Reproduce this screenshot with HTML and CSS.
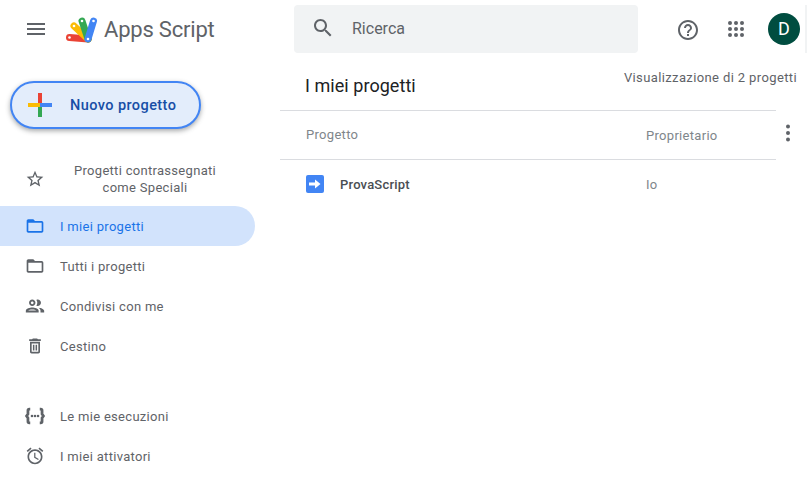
FILE: index.html
```html
<!DOCTYPE html>
<html lang="it">
<head>
  <meta charset="UTF-8">
  <meta name="viewport" content="width=device-width, initial-scale=1.0">
  <title>Apps Script</title>
  <link rel="stylesheet" href="styles.css">
</head>
<body>
  <header class="topbar">
    <div class="brand">
      <svg class="icon menu-icon" viewBox="0 0 24 24"><path d="M3 18h18v-2H3v2zm0-5h18v-2H3v2zm0-7v2h18V6H3z"/></svg>
      <svg class="logo" viewBox="0 0 34 28" width="34" height="28">
        <line x1="24" y1="24" x2="5.500" y2="22.500" stroke="#ea4335" stroke-width="7" stroke-linecap="round"/>
        <line x1="24" y1="24" x2="10" y2="11" stroke="#fbbc04" stroke-width="7" stroke-linecap="round"/>
        <line x1="24" y1="24" x2="18" y2="6" stroke="#34a853" stroke-width="7" stroke-linecap="round"/>
        <line x1="24" y1="24" x2="29.500" y2="6" stroke="#4285f4" stroke-width="7" stroke-linecap="round"/>
        <circle cx="5.500" cy="22.500" r="1.300" fill="#fff"/>
        <circle cx="10" cy="11" r="1.300" fill="#fff"/>
        <circle cx="18" cy="6" r="1.300" fill="#fff"/>
        <circle cx="29.500" cy="6" r="1.300" fill="#fff"/>
        <circle cx="24" cy="24" r="1.300" fill="#fff"/>
      </svg>
      <span class="brand-name">Apps Script</span>
    </div>
    <div class="search">
      <svg class="icon" viewBox="0 0 24 24"><path d="M15.500 14h-.79l-.28-.27C15.410 12.590 16 11.110 16 9.500 16 5.910 13.090 3 9.500 3S3 5.910 3 9.500 5.910 16 9.500 16c1.610 0 3.090-.59 4.230-1.570l.27.28v.79l5 4.990L20.490 19l-4.990-5zm-6 0C7.010 14 5 11.990 5 9.500S7.010 5 9.500 5 14 7.010 14 9.500 11.990 14 9.500 14z"/></svg>
      <span>Ricerca</span>
    </div>
    <div class="top-actions">
      <svg class="icon help-icon" viewBox="0 0 24 24"><path d="M11 18h2v-2h-2v2zm1-16C6.480 2 2 6.480 2 12s4.480 10 10 10 10-4.480 10-10S17.520 2 12 2zm0 18c-4.410 0-8-3.590-8-8s3.590-8 8-8 8 3.590 8 8-3.590 8-8 8zm0-14c-2.210 0-4 1.790-4 4h2c0-1.100.9-2 2-2s2 .9 2 2c0 2-3 1.750-3 5h2c0-2.250 3-2.500 3-5 0-2.210-1.790-4-4-4z"/></svg>
      <svg class="icon" viewBox="0 0 24 24">
        <circle cx="6" cy="6" r="2"/><circle cx="12" cy="6" r="2"/><circle cx="18" cy="6" r="2"/>
        <circle cx="6" cy="12" r="2"/><circle cx="12" cy="12" r="2"/><circle cx="18" cy="12" r="2"/>
        <circle cx="6" cy="18" r="2"/><circle cx="12" cy="18" r="2"/><circle cx="18" cy="18" r="2"/>
      </svg>
      <div class="avatar">D</div>
    </div>
    <div class="edge-sliver"></div>
  </header>

  <div class="layout">
    <aside class="sidebar">
      <button class="new-project">
        <svg viewBox="0 0 24 24" width="24" height="24">
          <rect x="10" y="0" width="4" height="12" fill="#ea4335"/>
          <rect x="10" y="12" width="4" height="12" fill="#34a853"/>
          <rect x="0" y="10" width="12" height="4" fill="#fbbc04"/>
          <rect x="12" y="10" width="12" height="4" fill="#4285f4"/>
        </svg>
        <span>Nuovo progetto</span>
      </button>

      <nav class="nav">
        <a class="nav-item starred">
          <svg class="icon" viewBox="0 0 24 24"><path d="M22 9.240l-7.190-.62L12 2 9.190 8.630 2 9.240l5.460 4.730L5.820 21 12 17.270 18.180 21l-1.630-7.030L22 9.240zM12 15.400l-3.760 2.270 1-4.280-3.320-2.880 4.380-.38L12 6.100l1.710 4.040 4.380.38-3.320 2.880 1 4.280L12 15.400z"/></svg>
          <span>Progetti contrassegnati come Speciali</span>
        </a>
        <a class="nav-item active">
          <svg class="icon" viewBox="0 0 24 24"><path d="M20 6h-8l-2-2H4c-1.100 0-1.990.9-1.990 2L2 18c0 1.100.9 2 2 2h16c1.100 0 2-.9 2-2V8c0-1.100-.9-2-2-2zm0 12H4V8h16v10z"/></svg>
          <span>I miei progetti</span>
        </a>
        <a class="nav-item">
          <svg class="icon" viewBox="0 0 24 24"><path d="M20 6h-8l-2-2H4c-1.100 0-1.990.9-1.990 2L2 18c0 1.100.9 2 2 2h16c1.100 0 2-.9 2-2V8c0-1.100-.9-2-2-2zm0 12H4V8h16v10z"/></svg>
          <span>Tutti i progetti</span>
        </a>
        <a class="nav-item">
          <svg class="icon people-icon" viewBox="0 0 24 24"><path d="M9 13.750c-2.340 0-7 1.170-7 3.500V19h14v-1.750c0-2.330-4.660-3.500-7-3.500zM4.340 17c.84-.58 2.870-1.250 4.660-1.250s3.820.67 4.660 1.250H4.340zM9 12c1.930 0 3.500-1.570 3.500-3.500S10.930 5 9 5 5.500 6.570 5.500 8.500 7.070 12 9 12zm0-5c.83 0 1.500.67 1.500 1.500S9.830 10 9 10s-1.500-.67-1.500-1.500S8.170 7 9 7zm7.040 6.810c1.160.84 1.960 1.960 1.960 3.440V19h4v-1.750c0-2.020-3.500-3.170-5.960-3.440zM15 12c1.930 0 3.500-1.570 3.500-3.500S16.930 5 15 5c-.54 0-1.040.13-1.500.35.63.89 1 1.980 1 3.150s-.37 2.260-1 3.150c.46.22.96.35 1.500.35z"/></svg>
          <span>Condivisi con me</span>
        </a>
        <a class="nav-item">
          <svg class="icon" viewBox="0 0 24 24"><path fill-rule="evenodd" d="M14.500 3h-5l-1 1H5v2h14V4h-3.500zM6 7v12c0 1.100.9 2 2 2h8c1.100 0 2-.9 2-2V7zm2 2h8v10H8z"/><path d="M9.500 10.500h1.800v7H9.500zM12.700 10.500h1.800v7h-1.800z"/></svg>
          <span>Cestino</span>
        </a>
        <a class="nav-item tools-start">
          <svg class="icon exec-icon" viewBox="0 0 24 24">
            <path class="bracket" d="M6.800 4.500H5.800Q4.300 4.500 4.300 6V9.800L2.800 12L4.300 14.200V18Q4.300 19.500 5.800 19.500H6.800M17.200 4.500H18.200Q19.700 4.500 19.700 6V9.800L21.200 12L19.700 14.200V18Q19.700 19.500 18.200 19.500H17.200"/>
            <circle cx="8.700" cy="12" r="1.400"/><circle cx="12" cy="12" r="1.400"/><circle cx="15.300" cy="12" r="1.400"/>
          </svg>
          <span>Le mie esecuzioni</span>
        </a>
        <a class="nav-item">
          <svg class="icon" viewBox="0 0 24 24"><path d="M22 5.720l-4.600-3.860-1.290 1.530 4.600 3.860L22 5.720zM7.880 3.390L6.600 1.860 2 5.710l1.290 1.530 4.590-3.850zM12.500 8H11v6l4.750 2.850.75-1.230-4-2.370V8zM12 4c-4.970 0-9 4.030-9 9s4.020 9 9 9c4.970 0 9-4.030 9-9s-4.030-9-9-9zm0 16c-3.870 0-7-3.130-7-7s3.130-7 7-7 7 3.130 7 7-3.130 7-7 7z"/></svg>
          <span>I miei attivatori</span>
        </a>
      </nav>
    </aside>

    <main class="projects">
      <div class="projects-head">
        <h1>I miei progetti</h1>
        <span class="count">Visualizzazione di 2 progetti</span>
      </div>
      <div class="row columns">
        <span class="col-name">Progetto</span>
        <span class="col-owner">Proprietario</span>
        <svg class="icon more-icon" viewBox="0 0 24 24"><circle cx="12" cy="5.500" r="2"/><circle cx="12" cy="12" r="2"/><circle cx="12" cy="18.500" r="2"/></svg>
      </div>
      <div class="row project">
        <span class="col-name">
          <svg class="file-icon" viewBox="0 0 18 18" width="18" height="18">
            <rect width="18" height="18" rx="2" fill="#4285f4"/>
            <path d="M3 7.500h6V4.500L14.500 9 9 13.500v-3H3z" fill="#fff"/>
          </svg>
          <b>ProvaScript</b>
        </span>
        <span class="col-owner">Io</span>
      </div>
    </main>
  </div>
</body>
</html>
```

FILE: styles.css
```css
html, body {
  margin: 0;
  height: 100%;
  background: white;
  overflow: hidden;
}
body {
  font-family: Roboto, "Liberation Sans", sans-serif;
  font-size: 13px;
  letter-spacing: 0.3px;
  color: #5f6368;
}
.icon {
  width: 24px;
  height: 24px;
  fill: #5f6368;
  flex: none;
}

/* top bar */
.topbar {
  position: relative;
  display: flex;
  align-items: center;
  height: 58px;
}
.brand {
  display: flex;
  align-items: center;
  width: 294px;
  padding-left: 24px;
  box-sizing: border-box;
}
.logo {
  margin-left: 16px;
  margin-bottom: 1px;
}
.brand-name {
  margin-left: 6px;
  font-size: 22px;
  letter-spacing: -0.2px;
}
.search {
  display: flex;
  align-items: center;
  gap: 17px;
  width: 344px;
  height: 48px;
  padding: 0 0 2px 17px;
  box-sizing: border-box;
  background: #f1f3f4;
  border-radius: 4px;
  font-size: 16px;
  letter-spacing: 0;
}
.top-actions {
  display: flex;
  align-items: center;
  gap: 24px;
  margin-left: 38px;
}
.help-icon {
  margin-top: 2px;
}
.avatar {
  width: 32px;
  height: 32px;
  margin-left: -4px;
  border-radius: 50%;
  background: #004d40;
  color: white;
  font-size: 18px;
  letter-spacing: 0;
  line-height: 32px;
  text-align: center;
}
.edge-sliver {
  position: absolute;
  top: 5px;
  right: 0;
  width: 2px;
  height: 48px;
  background: #f1f3f4;
}

/* sidebar */
.layout {
  display: flex;
}
.sidebar {
  width: 280px;
  flex: none;
}
.new-project {
  display: flex;
  align-items: center;
  gap: 18px;
  width: 191px;
  height: 48px;
  margin: 23px 0 29px 10px;
  padding: 0 0 0 16px;
  box-sizing: border-box;
  background: #e3edfb;
  border: 2px solid #4285f4;
  border-radius: 24px;
  box-shadow: 0 2px 5px rgba(60,64,67,0.45);
  color: #174ea6;
  font-family: inherit;
  font-size: 14.5px;
  font-weight: 500;
  letter-spacing: 0.42px;
}
.nav {
  width: 255px;
}
.nav-item {
  display: flex;
  align-items: center;
  gap: 15px;
  height: 40px;
  padding-left: 25px;
  border-radius: 0 20px 20px 0;
}
.nav-item .icon {
  width: 20px;
  height: 20px;
}
.nav-item .people-icon,
.nav-item .exec-icon {
  width: 22px;
  height: 22px;
  margin: 0 -1px;
}
.bracket {
  fill: none;
  stroke: #5f6368;
  stroke-width: 3;
}
.starred {
  height: 48px;
  padding-bottom: 6px;
  box-sizing: border-box;
}
.starred span {
  width: 170px;
  line-height: 17px;
  text-align: center;
}
.active {
  background: #d2e3fc;
  color: #1a73e8;
}
.active .icon {
  fill: #1a73e8;
}
.tools-start {
  margin-top: 30px;
}

/* project list */
.projects {
  width: 496px;
}
.projects-head {
  display: flex;
  justify-content: space-between;
  height: 52px;
  padding-left: 25px;
  border-bottom: 1px solid #dadce0;
}
.projects-head h1 {
  margin: 16px 0 0;
  color: #202124;
  font-size: 18px;
  font-weight: 400;
  letter-spacing: 0.05px;
  line-height: 24px;
}
.count {
  margin: 11px -21px 0 0;
  letter-spacing: 0.38px;
  line-height: 18px;
}
.row {
  display: flex;
  align-items: center;
  padding-left: 26px;
}
.columns {
  position: relative;
  height: 46px;
  padding-bottom: 2px;
  border-bottom: 1px solid #dadce0;
  color: #80868b;
}
.columns .col-owner {
  margin-top: 2px;
}
.project {
  height: 48px;
}
.col-name {
  display: flex;
  align-items: center;
  gap: 16px;
  width: 340px;
}
.col-name b {
  color: #4a4e52;
  font-weight: 500;
  letter-spacing: 0.2px;
}
.project .col-owner {
  color: #80868b;
}
.more-icon {
  position: absolute;
  right: -24px;
  top: 10px;
  fill: #5f6368;
}
.file-icon {
  flex: none;
}
```
